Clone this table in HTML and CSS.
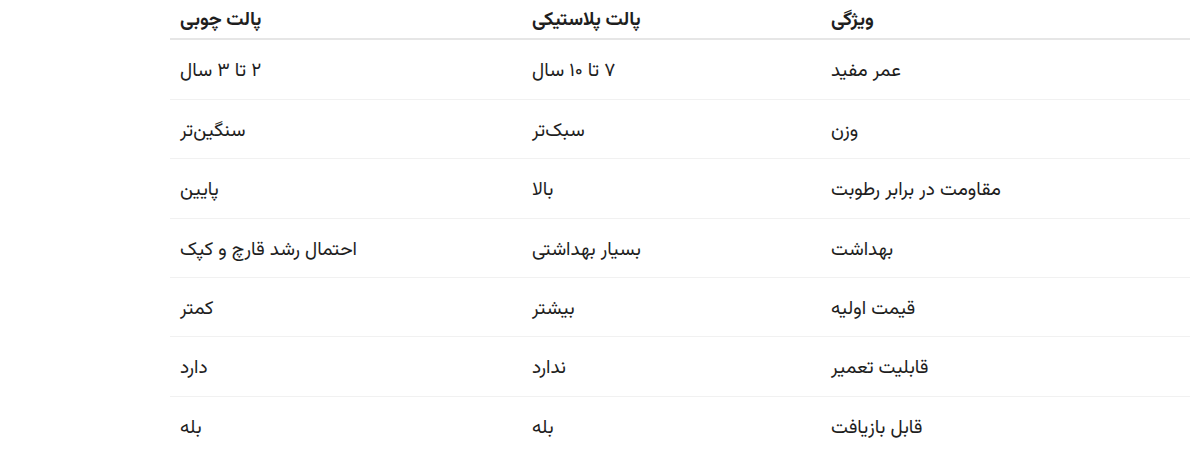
FILE: index.html
```html
<!DOCTYPE html>
<html lang="fa" dir="rtl">
<head>
<meta charset="utf-8">
<link rel="stylesheet" href="styles.css">
</head>
<body>
<div class="wrap">
<table class="compare">
<colgroup>
<col class="c1"><col class="c2"><col class="c3">
</colgroup>
<thead>
<tr><th>ویژگی</th><th>پالت پلاستیکی</th><th>پالت چوبی</th></tr>
</thead>
<tbody>
<tr><td>عمر مفید</td><td>۷ تا ۱۰ سال</td><td>۲ تا ۳ سال</td></tr>
<tr><td>وزن</td><td>سبک‌تر</td><td>سنگین‌تر</td></tr>
<tr><td>مقاومت در برابر رطوبت</td><td>بالا</td><td>پایین</td></tr>
<tr><td>بهداشت</td><td>بسیار بهداشتی</td><td>احتمال رشد قارچ و کپک</td></tr>
<tr><td>قیمت اولیه</td><td>بیشتر</td><td>کمتر</td></tr>
<tr><td>قابلیت تعمیر</td><td>ندارد</td><td>دارد</td></tr>
<tr><td>قابل بازیافت</td><td>بله</td><td>بله</td></tr>
</tbody>
</table>
</div>
</body>
</html>
```
FILE: styles.css
```css
html, body {
  margin: 0;
  padding: 0;
  background: #ffffff;
}
body {
  font-family: "Vazirmatn", "Noto Sans Arabic", "DejaVu Sans", sans-serif;
  color: #1e1e1e;
}
.wrap {
  display: flex;
  justify-content: flex-start;
  padding-right: 10px;
}
.compare {
  width: 1020px;
  border-collapse: collapse;
  table-layout: fixed;
  font-size: 19px;
}
.c1 { width: 369px; }
.c2 { width: 299px; }
.c3 { width: 352px; }
.compare th,
.compare td {
  text-align: left;
  padding: 21px 10px 15px;
  line-height: 22.4px;
  border-bottom: 1px solid #f1f1f1;
}
.compare th {
  font-weight: bold;
  padding: 10px 10px 6px;
  border-bottom: 2px solid #e6e6e6;
}
.compare tbody tr:last-child td {
  border-bottom: none;
}
```
